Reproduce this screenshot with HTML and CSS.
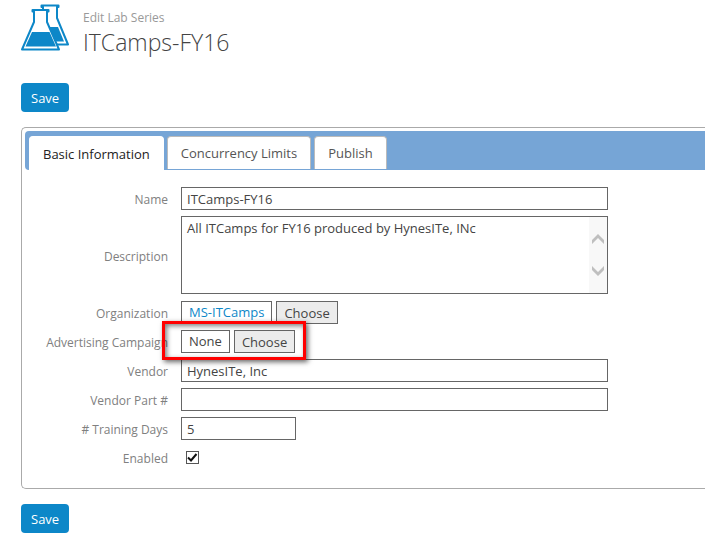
FILE: index.html
```html
<!DOCTYPE html>
<html lang="en">
<head>
<meta charset="utf-8">
<title>Edit Lab Series</title>
<link rel="stylesheet" href="styles.css">
</head>
<body>
<header class="page-header">
  <svg class="logo" width="48" height="48" viewBox="0 0 48 48" aria-hidden="true">
    <path class="glass" d="M20.500 1.500H37.500V3H36V14L47 40.500H30L22 20V3H20.500Z"/>
    <path class="liquid" d="M28 23H37L43 37.500H35Z"/>
    <path class="glass" d="M11.500 6H27.500V7.500H26V18L38 45.500H1L13 18V7.500H11.500Z"/>
    <path class="liquid" d="M11 28H28.500L35 42.500H4.500Z"/>
  </svg>
  <div class="titles">
    <p class="kicker">Edit Lab Series</p>
    <h1>ITCamps-FY16</h1>
  </div>
</header>
<form class="editor">
  <button type="button" class="save">Save</button>
  <section class="panel">
    <div class="tabs" role="tablist">
      <button type="button" role="tab" class="tab active" aria-selected="true">Basic Information</button>
      <button type="button" role="tab" class="tab">Concurrency Limits</button>
      <button type="button" role="tab" class="tab">Publish</button>
    </div>
    <div class="fields">
      <label for="name">Name</label>
      <input class="box" id="name" type="text" value="ITCamps-FY16">

      <label for="description">Description</label>
      <div class="memo">
        <textarea class="box" id="description">All ITCamps for FY16 produced by HynesITe, INc</textarea>
        <div class="scroller">
          <svg width="12" height="10" viewBox="0 0 12 10" aria-hidden="true"><path d="M0 6L6 0L12 6V10L6 4L0 10Z"/></svg>
          <svg width="12" height="10" viewBox="0 0 12 10" aria-hidden="true"><path d="M0 0L6 6L12 0V4L6 10L0 4Z"/></svg>
        </div>
      </div>

      <label for="organization">Organization</label>
      <div class="picker">
        <a class="box" href="#">MS-ITCamps</a>
        <button type="button" class="box choose" id="organization">Choose</button>
      </div>

      <label for="campaign">Advertising Campaign</label>
      <div class="picker highlighted">
        <span class="box">None</span>
        <button type="button" class="box choose" id="campaign">Choose</button>
      </div>

      <label for="vendor">Vendor</label>
      <input class="box" id="vendor" type="text" value="HynesITe, Inc">

      <label for="part">Vendor Part #</label>
      <input class="box" id="part" type="text">

      <label for="days"># Training Days</label>
      <input class="box short" id="days" type="text" value="5">

      <label for="enabled">Enabled</label>
      <div class="check">
        <input id="enabled" type="checkbox" checked>
        <svg width="13" height="13" viewBox="0 0 13 13" aria-hidden="true"><path d="M2 6.500L5 9.500L10.500 3"/></svg>
      </div>
    </div>
  </section>
  <button type="button" class="save">Save</button>
</form>
</body>
</html>
```
FILE: styles.css
```css
*,
*::after {
  box-sizing: border-box;
}

body {
  margin: 0;
  padding: 4px 0 0 21px;
  background: #fff;
  color: #444;
  font: 13px/20px "Open Sans", "Noto Sans", sans-serif;
  overflow-x: hidden;
}

button,
input,
textarea {
  font: inherit;
  color: inherit;
}

.page-header {
  display: flex;
  gap: 14px;
}

.logo {
  flex: none;
}

.glass {
  fill: #fff;
  stroke: #0d87c8;
  stroke-width: 2;
  stroke-linejoin: round;
}

.liquid {
  fill: #0d87c8;
}

.titles {
  padding-top: 4px;
}

.kicker {
  margin: 0;
  color: #999;
  font-size: 12px;
}

h1 {
  margin: 0;
  font-size: 23px;
  line-height: 28px;
  font-weight: 300;
}

.editor {
  display: flex;
  flex-direction: column;
  align-items: flex-start;
  gap: 15px;
  padding-top: 27px;
}

.save {
  height: 29px;
  padding: 0 10px;
  border: 0;
  border-radius: 4px;
  background: #0d87c8;
  color: #fff;
}

.panel {
  align-self: stretch;
  padding: 3px 0 19px 3px;
  border: 1px solid #aaa;
  border-right: 0;
  border-radius: 5px 0 0 5px;
}

.tabs {
  display: flex;
  gap: 3px;
  height: 39px;
  padding: 5px 0 0 4px;
  border-radius: 4px 0 0 4px;
  background: #76a5d6;
}

.tab {
  height: 33px;
  padding: 0 13px;
  border: 1px solid #bbb;
  border-bottom: 0;
  border-radius: 4px 4px 0 0;
  background: #fff;
  color: #555;
}

.tab.active {
  height: 34px;
  border-color: #fff;
  color: #222;
}

.fields {
  display: grid;
  grid-template-columns: 143px minmax(0, 427px);
  column-gap: 13px;
  row-gap: 6px;
  grid-template-rows: 23px 79px repeat(6, 23px);
  padding-top: 17px;
}

label {
  align-self: center;
  padding-top: 2px;
  color: #808080;
  font-size: 12px;
  text-align: right;
  white-space: nowrap;
}

.box {
  height: 23px;
  padding: 0 5px;
  border: 1px solid #666;
  border-radius: 0;
  background: #fff;
}

input.box {
  width: 100%;
}

input.short {
  width: 115px;
}

.memo {
  position: relative;
  height: 78px;
}

textarea.box {
  display: block;
  width: 100%;
  height: 100%;
  padding: 1px 24px 1px 5px;
  resize: none;
  overflow: hidden;
}

.scroller {
  position: absolute;
  top: 1px;
  right: 1px;
  bottom: 1px;
  width: 18px;
  display: flex;
  flex-direction: column;
  align-items: center;
  justify-content: center;
  gap: 22px;
  background: #f8f8f8;
  fill: #bfbfbf;
}

.picker {
  position: relative;
  display: flex;
  gap: 4px;
}

.picker .box {
  padding: 0 7px;
}

.picker a {
  color: #0d87c8;
  text-decoration: none;
}

.picker .choose {
  background: #ececec;
}

.highlighted::after {
  content: "";
  position: absolute;
  left: -19px;
  top: -9px;
  width: 144px;
  height: 39px;
  border: 3px solid #f00;
  box-shadow: 2px 2px 5px rgba(0, 0, 0, 0.6), inset 2px 2px 5px rgba(0, 0, 0, 0.5);
  pointer-events: none;
}

.check {
  position: relative;
  padding: 5px;
}

.check input {
  appearance: none;
  display: block;
  width: 13px;
  height: 13px;
  margin: 0;
  border: 1px solid #555;
}

.check svg {
  position: absolute;
  left: 5px;
  top: 5px;
  fill: none;
  stroke: #111;
  stroke-width: 2;
  pointer-events: none;
}
```
